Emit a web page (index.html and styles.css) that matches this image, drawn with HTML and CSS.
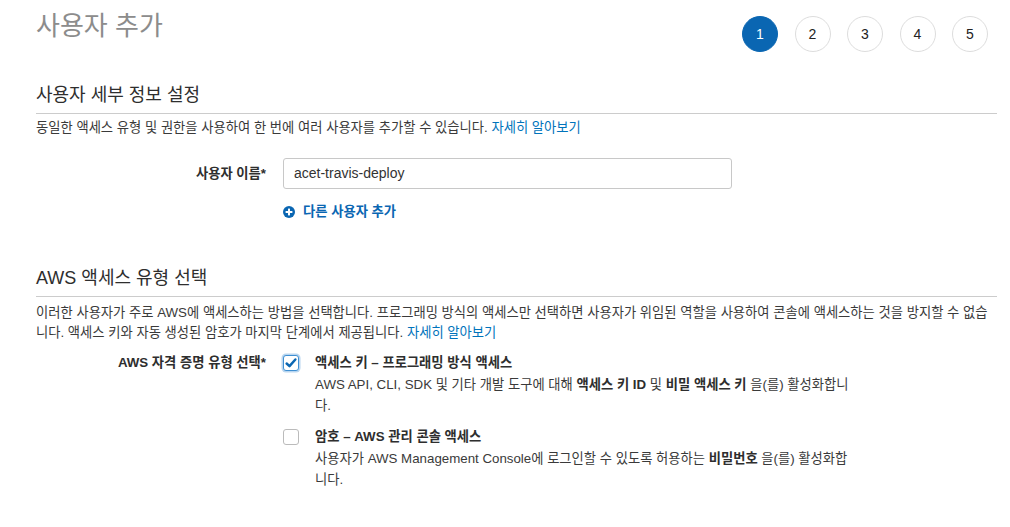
FILE: index.html
```html
<!DOCTYPE html>
<html lang="ko">
<head>
<meta charset="utf-8">
<title>사용자 추가</title>
<link rel="stylesheet" href="styles.css">
</head>
<body>
<div class="page">
  <header class="top">
    <h1 class="title">사용자 추가</h1>
    <ol class="steps">
      <li class="step active">1</li>
      <li class="step">2</li>
      <li class="step">3</li>
      <li class="step">4</li>
      <li class="step">5</li>
    </ol>
  </header>

  <section class="section s1">
    <h2 class="section-title">사용자 세부 정보 설정</h2>
    <p class="desc">동일한 액세스 유형 및 권한을 사용하여 한 번에 여러 사용자를 추가할 수 있습니다. <a class="link" href="#">자세히 알아보기</a></p>
    <div class="form-row row-name">
      <div class="form-label label-name">사용자 이름*</div>
      <div class="field">
        <div class="input">acet-travis-deploy</div>
        <a class="add-user" href="#">
          <svg class="plus" viewBox="0 0 12 12" width="12" height="12" aria-hidden="true">
            <circle cx="6" cy="6" r="6" fill="#0a66b2"/>
            <rect x="2.6" y="5" width="6.8" height="2" fill="#fff"/>
            <rect x="5" y="2.6" width="2" height="6.8" fill="#fff"/>
          </svg>
          <span>다른 사용자 추가</span>
        </a>
      </div>
    </div>
  </section>

  <section class="section s2">
    <h2 class="section-title">AWS 액세스 유형 선택</h2>
    <p class="desc desc-2">이러한 사용자가 주로 AWS에 액세스하는 방법을 선택합니다. 프로그래밍 방식의 액세스만 선택하면 사용자가 위임된 역할을 사용하여 콘솔에 액세스하는 것을 방지할 수 없습니다. 액세스 키와 자동 생성된 암호가 마지막 단계에서 제공됩니다. <a class="link" href="#">자세히 알아보기</a></p>
    <div class="form-row row-access">
      <div class="form-label label-access">AWS 자격 증명 유형 선택*</div>
      <div class="options">
        <div class="option">
          <span class="cb checked">
            <svg viewBox="0 0 16 16" width="14" height="14" aria-hidden="true">
              <path d="M3 8.6 L6.3 11.6 L13 4" fill="none" stroke="#0a66b2" stroke-width="2.8" stroke-linecap="round" stroke-linejoin="round"/>
            </svg>
          </span>
          <div class="opt-text">
            <div class="opt-title">액세스 키 – 프로그래밍 방식 액세스</div>
            <div class="opt-desc">AWS API, CLI, SDK 및 기타 개발 도구에 대해 <b>액세스 키 ID</b> 및 <b>비밀 액세스 키</b> 을(를) 활성화합니다.</div>
          </div>
        </div>
        <div class="option">
          <span class="cb"></span>
          <div class="opt-text">
            <div class="opt-title">암호 – AWS 관리 콘솔 액세스</div>
            <div class="opt-desc">사용자가 AWS Management Console에 로그인할 수 있도록 허용하는 <b>비밀번호</b> 을(를) 활성화합니다.</div>
          </div>
        </div>
      </div>
    </div>
  </section>
</div>
</body>
</html>
```

FILE: styles.css
```css
* { box-sizing: border-box; }

html, body {
  margin: 0;
  padding: 0;
  background: #fff;
}

body {
  font-family: "Liberation Sans", "Noto Sans CJK KR", sans-serif;
  font-size: 13.3px;
  color: #3a3a3a;
}

.page {
  width: 1010px;
  padding: 0 13px 0 36px;
}

/* header */
.top {
  display: flex;
  justify-content: space-between;
  align-items: flex-start;
  padding-top: 11px;
  height: 52px;
}

.title {
  margin: 0;
  font-size: 26px;
  line-height: 31px;
  font-weight: normal;
  color: #8c8c8c;
}

.steps {
  list-style: none;
  margin: 5px 9px 0 0;
  padding: 0;
  display: flex;
  gap: 16.5px;
}

.step {
  width: 36px;
  height: 36px;
  border-radius: 50%;
  border: 1px solid #ddd;
  display: flex;
  align-items: center;
  justify-content: center;
  font-size: 14px;
  color: #222;
  background: #fff;
}

.step.active {
  background: #0a66b2;
  border-color: #0a66b2;
  color: #fff;
}

/* sections */
.section-title {
  margin: 0;
  font-size: 18px;
  line-height: 24px;
  font-weight: normal;
  color: #2e2e2e;
  padding-bottom: 6px;
  border-bottom: 1px solid #ccc;
}

.s1 { margin-top: 31px; }
.s2 { margin-top: 44px; }

.desc {
  margin: 4px 0 0;
  line-height: 20px;
}

.desc-2 {
  margin-top: 6px;
  line-height: 19.5px;
}

.link {
  color: #0073bb;
  text-decoration: none;
}

/* form rows */
.form-row {
  display: grid;
  grid-template-columns: 230px 1fr;
  column-gap: 17px;
}

.row-name { margin-top: 20px; }
.row-access { margin-top: 10px; }

.form-label {
  text-align: right;
  font-weight: bold;
  color: #2e2e2e;
}

.label-name { line-height: 31px; }
.label-access { line-height: 22px; }

.input {
  width: 449px;
  height: 31px;
  border: 1px solid #c8c8c8;
  border-radius: 3px;
  padding: 0 10px;
  font-size: 14px;
  line-height: 29px;
  color: #333;
}

.add-user {
  margin-top: 13px;
  display: flex;
  align-items: center;
  gap: 8px;
  line-height: 20px;
  color: #0a66b2;
  font-weight: bold;
  text-decoration: none;
}

.plus { display: block; }

/* options */
.options {
  display: flex;
  flex-direction: column;
  gap: 10px;
}

.option {
  display: flex;
  gap: 16px;
  align-items: flex-start;
}

.cb {
  flex: 0 0 16px;
  width: 16px;
  height: 16px;
  margin-top: 3px;
  border: 1px solid #bbb;
  border-radius: 3px;
  background: #fff;
  display: flex;
  align-items: center;
  justify-content: center;
}

.cb.checked {
  border-color: #3f8fd2;
  box-shadow: 0 0 0 1.5px #b9d6f0;
}

.cb svg { display: block; }

.opt-text { width: 542px; }

.opt-title {
  font-weight: bold;
  color: #2e2e2e;
  line-height: 22px;
}

.opt-desc {
  line-height: 21px;
}

.opt-desc b {
  color: #2e2e2e;
}
```
